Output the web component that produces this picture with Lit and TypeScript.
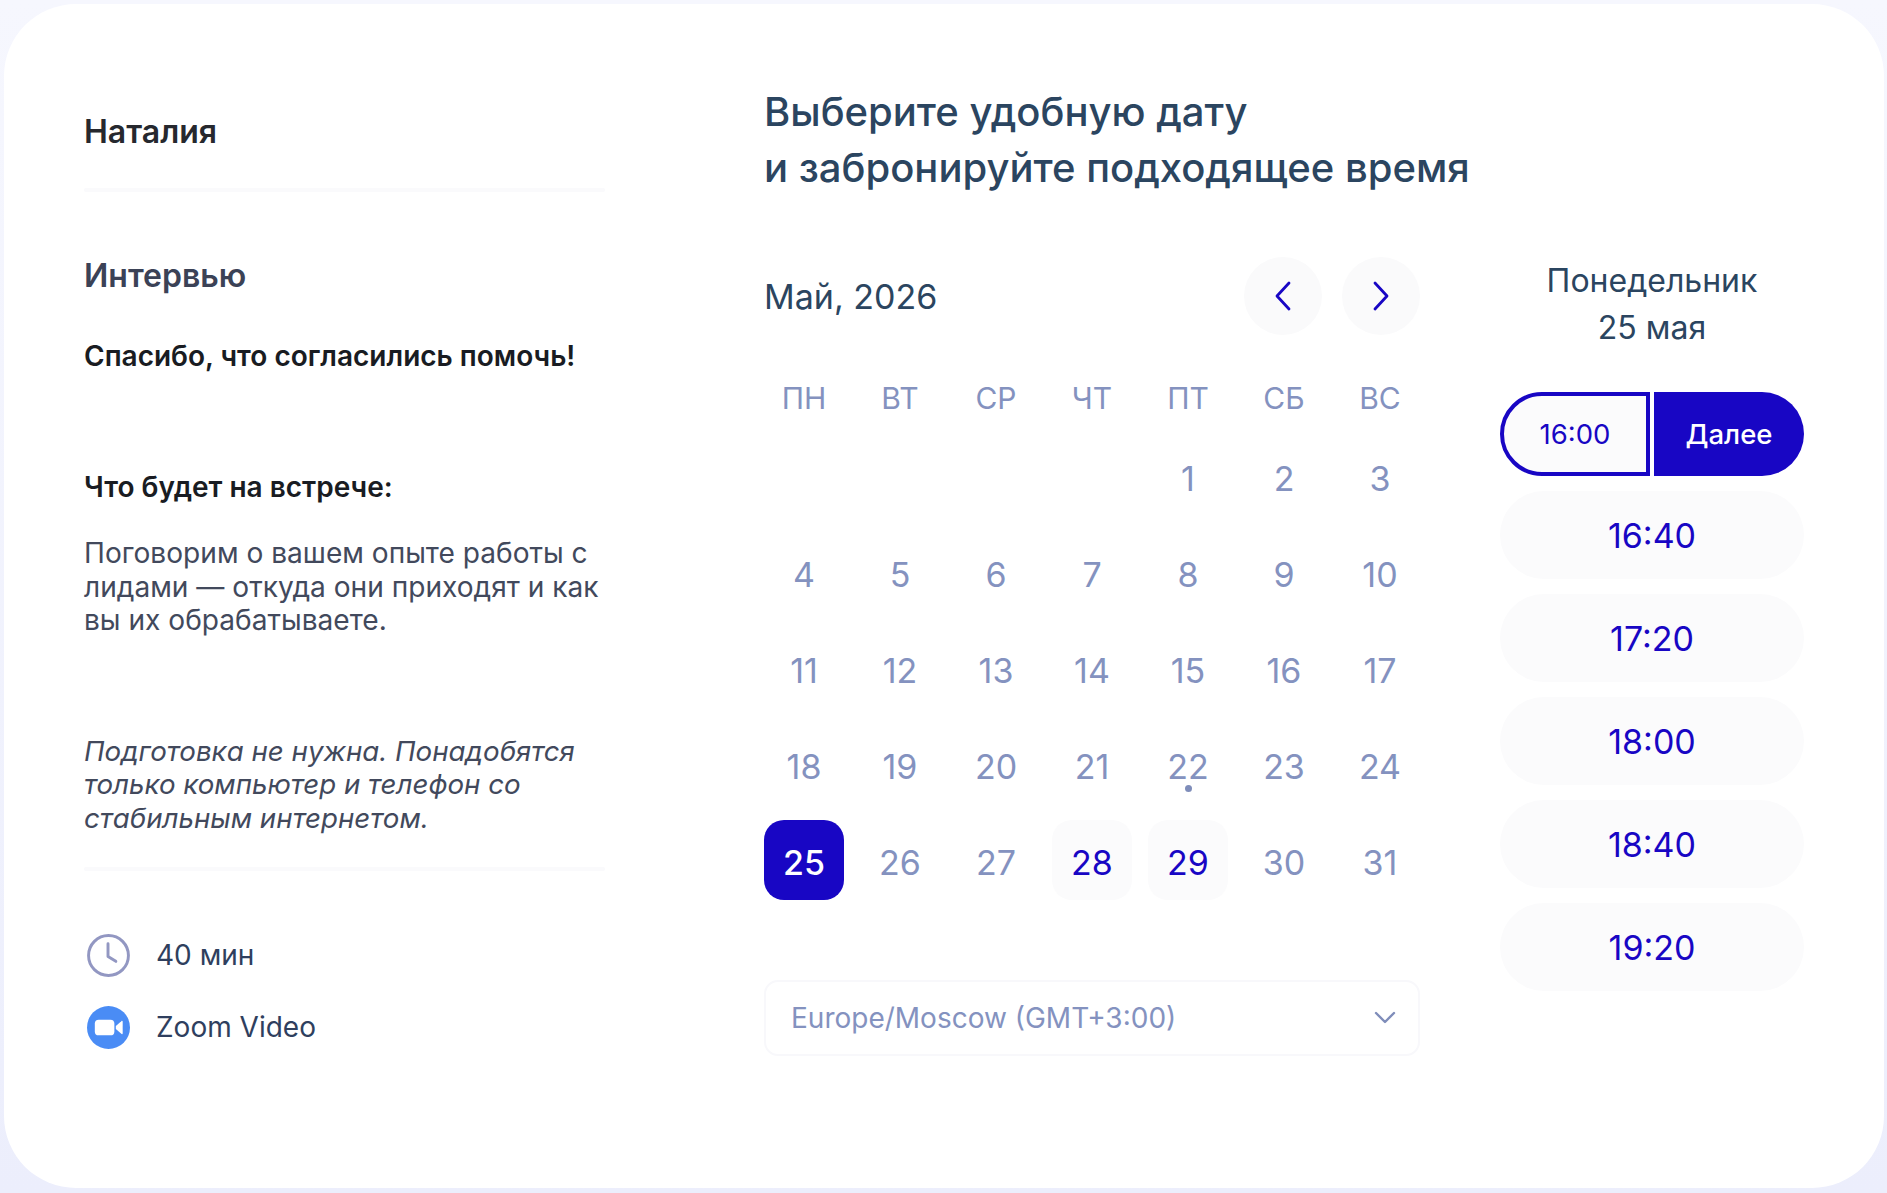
import { LitElement, html, css, svg } from "lit";
import { customElement } from "lit/decorators.js";

const WEEKDAYS = ["ПН", "ВТ", "СР", "ЧТ", "ПТ", "СБ", "ВС"];
const OPEN_DAYS = [28, 29];
const SLOTS = ["16:40", "17:20", "18:00", "18:40", "19:20"];

const chevron = (d: string) => svg`<path d=${d} fill="none" stroke="#1806c4" stroke-width="2.8" stroke-linecap="round" stroke-linejoin="round" />`;

@customElement("app-root")
export class AppRoot extends LitElement {
  static styles = css`
    :host {
      display: block;
      min-height: 1193px;
      box-sizing: border-box;
      padding: 4px 3px 5px 4px;
      background: linear-gradient(180deg, #f6f7fe 0%, #eceefc 100%);
      font-family: Inter, "Noto Sans", sans-serif;
      color: #2b4560;
    }

    .card {
      height: 1184px;
      box-sizing: border-box;
      display: flex;
      padding: 0 0 0 80px;
      background: #fff;
      border-radius: 72px;
    }

    .info {
      width: 521px;
      flex: none;
      padding-top: 108px;
    }

    .name {
      margin: 0;
      font-size: 32px;
      line-height: 40px;
      font-weight: 600;
      color: #26282e;
    }

    .rule {
      height: 4px;
      background: #fafafc;
      border-radius: 2px;
    }

    .rule-top {
      margin-top: 36px;
    }

    .rule-bottom {
      margin-top: 31px;
    }

    .event {
      margin: 64px 0 0;
      font-size: 32px;
      line-height: 40px;
      font-weight: 600;
      color: #3b4256;
    }

    .thanks,
    .lead {
      margin: 0;
      font-size: 28px;
      line-height: 34px;
      font-weight: 600;
      color: #191c22;
    }

    .thanks {
      margin-top: 43px;
    }

    .lead {
      margin-top: 97px;
    }

    .copy {
      margin: 33px 0 0;
      font-size: 28.1px;
      line-height: 33.6px;
      color: #42495c;
    }

    .copy.note {
      margin-top: 97px;
      font-size: 27.7px;
      font-style: italic;
    }

    .meta {
      display: flex;
      align-items: center;
      gap: 26px;
      padding-left: 3px;
      font-size: 28px;
      line-height: 42px;
      color: #2f3f5e;
    }

    .meta svg {
      width: 43px;
      height: 43px;
      flex: none;
    }

    .meta-time {
      margin-top: 63px;
    }

    .meta-place {
      margin-top: 29px;
    }

    .booking {
      margin-left: 159px;
      padding-top: 80px;
    }

    .title {
      margin: 0;
      font-size: 40px;
      line-height: 56px;
      font-weight: 500;
      color: #2b4560;
    }

    .columns {
      display: flex;
      gap: 80px;
      margin-top: 61px;
    }

    .calendar {
      width: 656px;
    }

    .month-bar {
      display: flex;
      align-items: center;
      gap: 20px;
    }

    .month {
      flex: 1;
      padding-top: 2px;
      font-size: 34px;
      line-height: 76px;
    }

    .nav {
      width: 78px;
      height: 78px;
      padding: 0;
      display: flex;
      align-items: center;
      justify-content: center;
      border: none;
      border-radius: 50%;
      background: #fafafb;
    }

    .nav svg {
      width: 18px;
      height: 30px;
    }

    .week,
    .days {
      display: grid;
      grid-template-columns: repeat(7, 80px);
      column-gap: 16px;
      text-align: center;
    }

    .week {
      margin-top: 43px;
      font-size: 30px;
      line-height: 40px;
      color: #8492bf;
    }

    .days {
      margin-top: 18px;
      row-gap: 16px;
      grid-auto-rows: 80px;
    }

    .day {
      position: relative;
      display: flex;
      align-items: center;
      justify-content: center;
      padding-top: 5px;
      box-sizing: border-box;
      border-radius: 20px;
      font-size: 34px;
      color: #8492bf;
    }

    .day.open {
      background: #fbfbfc;
      color: #1806c4;
    }

    .day.picked {
      background: #1806c4;
      color: #fff;
      font-weight: 500;
    }

    .dot {
      position: absolute;
      left: 37px;
      top: 61px;
      width: 7px;
      height: 7px;
      border-radius: 50%;
      background: #7f8dba;
    }

    .zone {
      margin-top: 80px;
      height: 76px;
      box-sizing: border-box;
      display: flex;
      align-items: center;
      justify-content: space-between;
      padding: 0 22px 0 25px;
      border: 2px solid #f8f8fb;
      border-radius: 14px;
      font-size: 28px;
      color: #8492bf;
    }

    .zone svg {
      width: 22px;
      height: 14px;
    }

    .times {
      width: 304px;
    }

    .day-title {
      margin: 0;
      text-align: center;
      font-size: 32px;
      line-height: 47px;
      font-weight: 400;
      color: #2b4560;
    }

    .picked-row {
      display: grid;
      grid-template-columns: 1fr 1fr;
      gap: 4px;
      margin-top: 41px;
      height: 84px;
    }

    .picked-time,
    .next {
      box-sizing: border-box;
      display: flex;
      align-items: center;
      justify-content: center;
      font-size: 27.5px;
    }

    .picked-time {
      border: 4px solid #1806c4;
      border-radius: 42px 0 0 42px;
      background: #fbfbfc;
      color: #1806c4;
    }

    .next {
      border-radius: 0 42px 42px 0;
      background: #1806c4;
      color: #fff;
      font-weight: 500;
    }

    .slot {
      height: 88px;
      margin-top: 15px;
      display: flex;
      align-items: center;
      justify-content: center;
      border-radius: 44px;
      background: #fbfbfc;
      color: #1806c4;
      font-size: 34px;
    }
  `;

  renderDay(day: number) {
    const cls = day === 25 ? "day picked" : OPEN_DAYS.includes(day) ? "day open" : "day";
    return html`<div class=${cls}>${day}${day === 22 ? html`<span class="dot"></span>` : ""}</div>`;
  }

  render() {
    const days = Array.from({ length: 31 }, (_, i) => i + 1);
    return html`<div class="card">
      <section class="info">
        <h2 class="name">Наталия</h2>
        <div class="rule rule-top"></div>
        <h3 class="event">Интервью</h3>
        <p class="thanks">Спасибо, что согласились помочь!</p>
        <p class="lead">Что будет на встрече:</p>
        <p class="copy">Поговорим о вашем опыте работы с<br />лидами — откуда они приходят и как<br />вы их обрабатываете.</p>
        <p class="copy note">Подготовка не нужна. Понадобятся<br />только компьютер и телефон со<br />стабильным интернетом.</p>
        <div class="rule rule-bottom"></div>
        <div class="meta meta-time">
          <svg viewBox="0 0 44 44">
            <circle cx="22" cy="22" r="20.4" fill="none" stroke="#9297c2" stroke-width="3" />
            <path d="M21.5 10v13l8 5" fill="none" stroke="#9297c2" stroke-width="3" stroke-linecap="round" stroke-linejoin="round" />
          </svg>
          <span>40 мин</span>
        </div>
        <div class="meta meta-place">
          <svg viewBox="0 0 44 44">
            <circle cx="22" cy="22" r="22" fill="#4a8cf5" />
            <rect x="8" y="14" width="20" height="16" rx="4" fill="#fff" />
            <path d="M29.5 20.5l5.6-5c.7-.6 1.4-.3 1.4.6v11.8c0 .9-.7 1.2-1.4.6l-5.6-5z" fill="#fff" />
          </svg>
          <span>Zoom Video</span>
        </div>
      </section>

      <section class="booking">
        <h1 class="title">Выберите удобную дату<br />и забронируйте подходящее время</h1>
        <div class="columns">
          <div class="calendar">
            <div class="month-bar">
              <span class="month">Май, 2026</span>
              <button class="nav">
                <svg viewBox="0 0 18 30">${chevron("M15 2 3 15l12 13")}</svg>
              </button>
              <button class="nav">
                <svg viewBox="0 0 18 30">${chevron("M3 2l12 13L3 28")}</svg>
              </button>
            </div>
            <div class="week">${WEEKDAYS.map((d) => html`<span>${d}</span>`)}</div>
            <div class="days">
              ${[0, 1, 2, 3].map(() => html`<div></div>`)}
              ${days.map((d) => this.renderDay(d))}
            </div>
            <div class="zone">
              <span>Europe/Moscow (GMT+3:00)</span>
              <svg viewBox="0 0 22 14">
                <path d="M2 2l9 9 9-9" fill="none" stroke="#7f8dba" stroke-width="2.4" stroke-linecap="round" stroke-linejoin="round" />
              </svg>
            </div>
          </div>
          <div class="times">
            <h3 class="day-title">Понедельник<br />25 мая</h3>
            <div class="picked-row">
              <div class="picked-time">16:00</div>
              <div class="next">Далее</div>
            </div>
            ${SLOTS.map((s) => html`<div class="slot">${s}</div>`)}
          </div>
        </div>
      </section>
    </div>`;
  }
}
